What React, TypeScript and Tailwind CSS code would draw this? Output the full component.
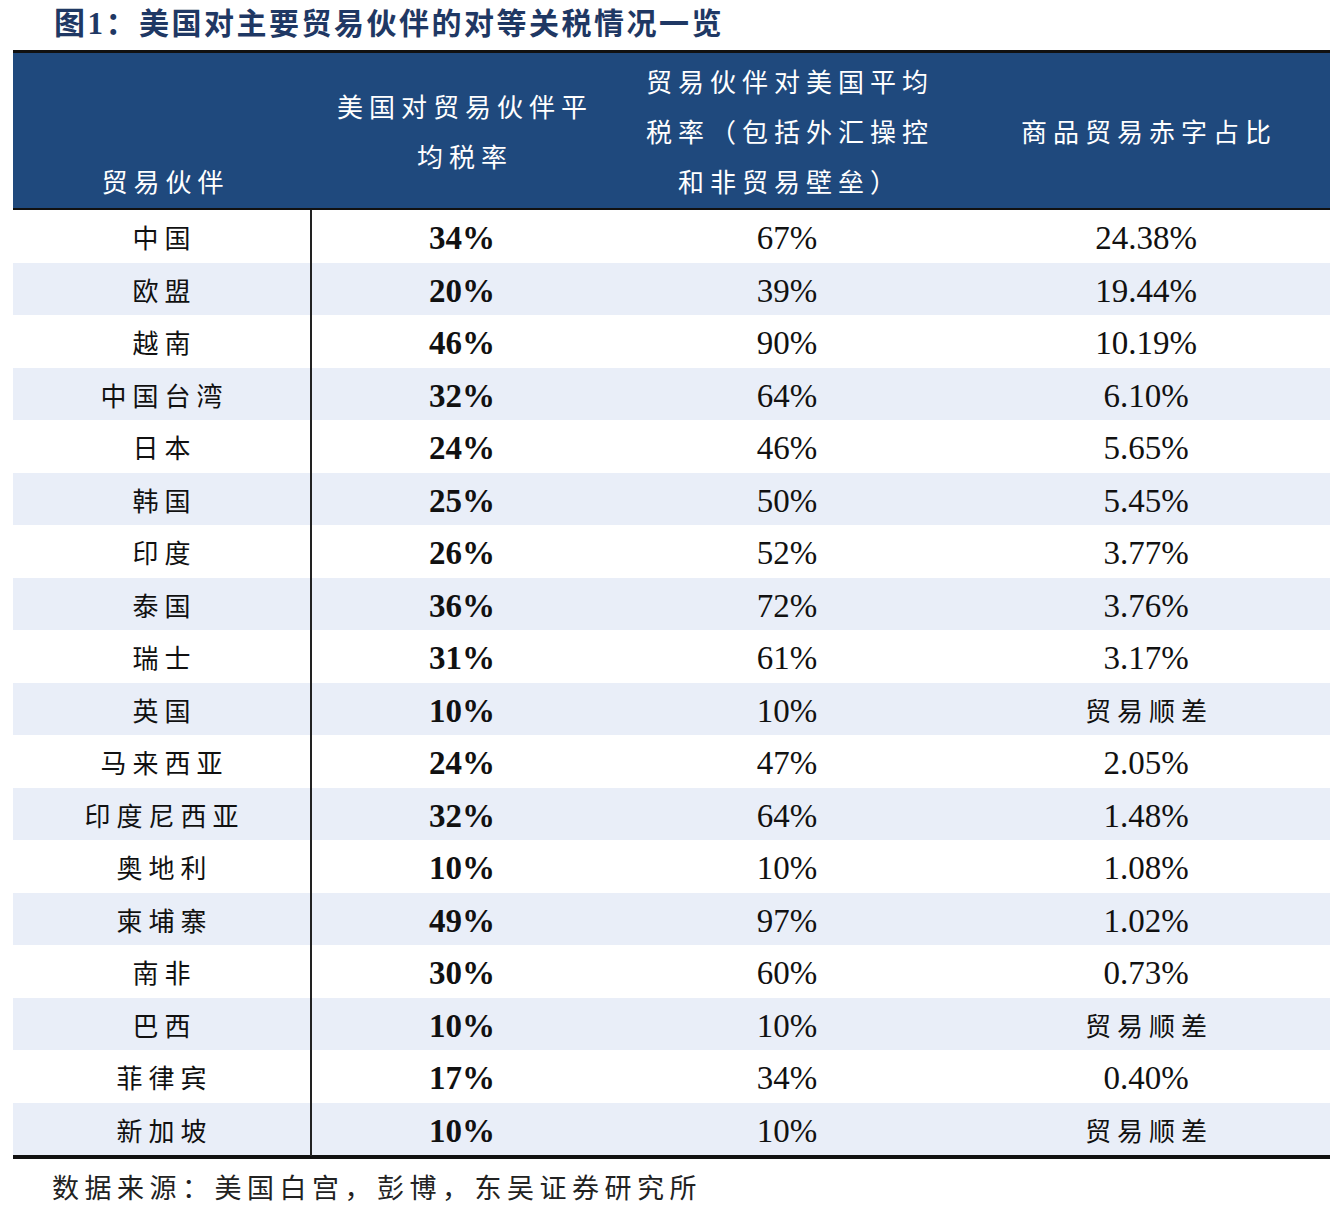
import React from "react";

const rows: [string, string, string, string][] = [
  ["中国", "34%", "67%", "24.38%"],
  ["欧盟", "20%", "39%", "19.44%"],
  ["越南", "46%", "90%", "10.19%"],
  ["中国台湾", "32%", "64%", "6.10%"],
  ["日本", "24%", "46%", "5.65%"],
  ["韩国", "25%", "50%", "5.45%"],
  ["印度", "26%", "52%", "3.77%"],
  ["泰国", "36%", "72%", "3.76%"],
  ["瑞士", "31%", "61%", "3.17%"],
  ["英国", "10%", "10%", "贸易顺差"],
  ["马来西亚", "24%", "47%", "2.05%"],
  ["印度尼西亚", "32%", "64%", "1.48%"],
  ["奥地利", "10%", "10%", "1.08%"],
  ["柬埔寨", "49%", "97%", "1.02%"],
  ["南非", "30%", "60%", "0.73%"],
  ["巴西", "10%", "10%", "贸易顺差"],
  ["菲律宾", "17%", "34%", "0.40%"],
  ["新加坡", "10%", "10%", "贸易顺差"],
];

const cjk = "font-['Noto_Sans_CJK_SC',sans-serif]";
const num = "font-['Liberation_Serif','Noto_Sans_CJK_SC',serif]";

export default function App() {
  return (
    <div className="w-[1341px] h-[1205px] bg-white relative overflow-hidden">
      <div className={`h-[50px] pl-[54px] pt-[1px] text-[30px] leading-[40px] font-semibold text-[#1f3864] tracking-[2.5px] ${cjk}`}>
        <span className={`${num} text-[31px] font-bold`}>图1：</span>
        <span>美国对主要贸易伙伴的对等关税情况一览</span>
      </div>
      <div className="ml-[13px] w-[1317px] border-t-[3px] border-[#111]">
        <div className={`grid grid-cols-[299px_300px_350px_368px] h-[157px] bg-[#1f497d] border-b-2 border-[#111] text-white text-[26px] leading-[50px] tracking-[6px] ${cjk}`}>
          <div className="flex items-end justify-center pb-[2px] pl-[6px]">贸易伙伴</div>
          <div className="flex flex-col items-center justify-center text-center pl-[6px]">
            <div>美国对贸易伙伴平</div>
            <div>均税率</div>
          </div>
          <div className="flex flex-col items-center justify-center text-center pl-[6px]">
            <div>贸易伙伴对美国平均</div>
            <div>税率（包括外汇操控</div>
            <div>和非贸易壁垒）</div>
          </div>
          <div className="flex items-center justify-center pl-[6px]">商品贸易赤字占比</div>
        </div>
        <div className="border-b-4 border-[#111]">
          {rows.map((r, i) => (
            <div
              key={i}
              className={`grid grid-cols-[299px_300px_350px_368px] h-[52.5px] ${i % 2 === 1 ? "bg-[#e9eef8]" : "bg-white"} text-[#111]`}
            >
              <div className={`flex items-center justify-center border-r-2 border-[#222] text-[26px] tracking-[6px] pl-[6px] ${cjk}`}>
                {r[0]}
              </div>
              <div className={`flex items-center justify-center text-[33px] font-bold pt-[4px] ${num}`}>{r[1]}</div>
              <div className={`flex items-center justify-center text-[33px] pt-[4px] ${num}`}>{r[2]}</div>
              {r[3] === "贸易顺差" ? (
                <div className={`flex items-center justify-center text-[26px] tracking-[6px] pl-[6px] ${cjk}`}>{r[3]}</div>
              ) : (
                <div className={`flex items-center justify-center text-[33px] pt-[4px] ${num}`}>{r[3]}</div>
              )}
            </div>
          ))}
        </div>
      </div>
      <div className={`pl-[52px] pt-[10px] text-[27px] leading-[36px] tracking-[5.5px] text-[#222] ${cjk}`}>
        数据来源：美国白宫，彭博，东吴证券研究所
      </div>
    </div>
  );
}
